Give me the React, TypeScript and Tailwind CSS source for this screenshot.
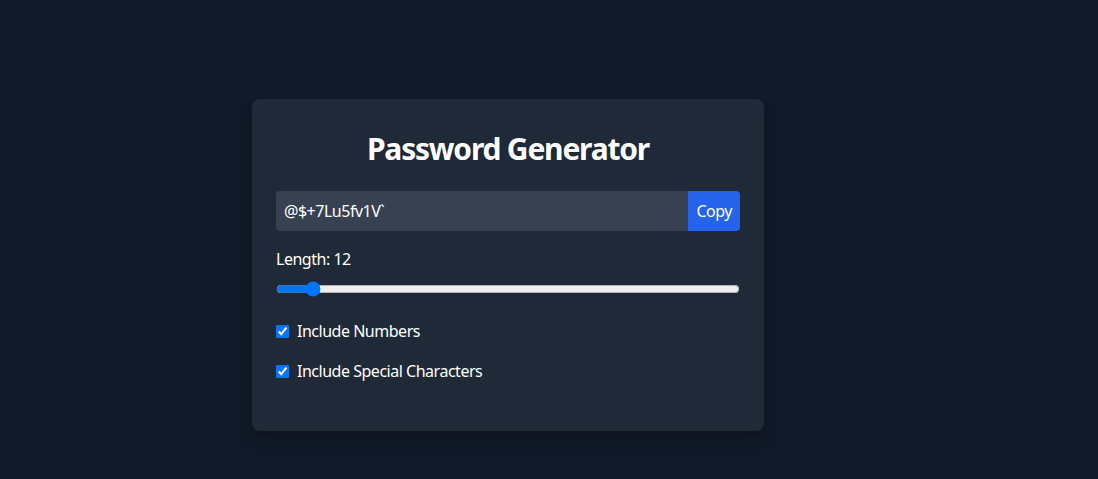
import { useState } from 'react'

export default function App() {
  const [length, setLength] = useState(12)
  const [numbers, setNumbers] = useState(true)
  const [special, setSpecial] = useState(true)
  const password = '@$+7Lu5fv1V`'

  return (
    <div className="min-h-screen bg-[#111827] font-['Noto_Sans',sans-serif] tracking-[-0.03em] text-white">
      <div className="pt-[99px] pl-[252px]">
        <div className="w-[512px] rounded-lg bg-[#1f2937] px-6 pt-8 pb-12 shadow-lg">
          <h1 className="mb-6 text-center text-3xl font-bold tracking-[-0.04em]">Password Generator</h1>

          <div className="mb-4 flex">
            <input
              type="text"
              readOnly
              value={password}
              className="flex-1 rounded-l bg-[#374151] px-2 py-2 text-base tracking-[-0.03em] text-white outline-none"
            />
            <button className="rounded-r bg-[#2563eb] px-2 py-2 text-base text-white">Copy</button>
          </div>

          <div className="mb-[22px]">
            <label className="mb-[10px] block text-base">Length: {length}</label>
            <input
              type="range"
              min={4}
              max={128}
              value={length}
              onChange={(e) => setLength(Number(e.target.value))}
              className="block w-full"
            />
          </div>

          <label className="mb-4 flex items-center">
            <input type="checkbox" checked={numbers} onChange={() => setNumbers(!numbers)} className="h-[13px] w-[13px]" />
            <span className="ml-2 text-base leading-6">Include Numbers</span>
          </label>

          <label className="flex items-center">
            <input type="checkbox" checked={special} onChange={() => setSpecial(!special)} className="h-[13px] w-[13px]" />
            <span className="ml-2 text-base leading-6">Include Special Characters</span>
          </label>
        </div>
      </div>
    </div>
  )
}
